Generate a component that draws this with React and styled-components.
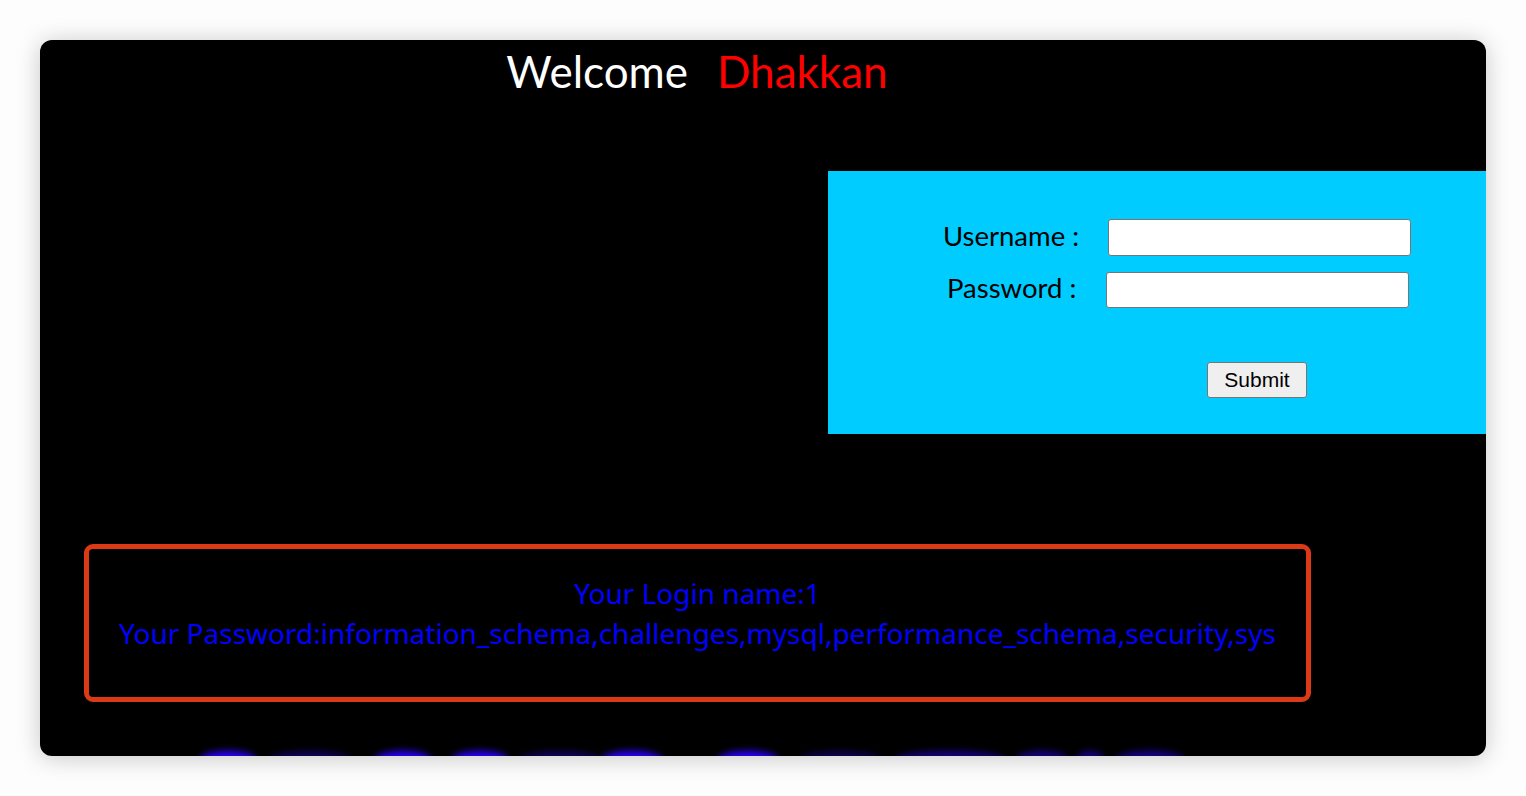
import React from "react";
import styled, { createGlobalStyle } from "styled-components";

const Global = createGlobalStyle`
  html, body { margin: 0; padding: 0; background: #fdfdfd; }
  body { font-family: "Lato", "Noto Sans", sans-serif; }
`;

const Page = styled.div`
  padding: 40px;
  box-sizing: border-box;
  width: 1526px;
  height: 796px;
`;

const Card = styled.div`
  position: relative;
  height: 716px;
  background: #000;
  border-radius: 12px;
  overflow: hidden;
  box-shadow: 0 2px 24px rgba(0, 0, 0, 0.22);
  display: flex;
  flex-direction: column;
  & > * { flex-shrink: 0; }
`;

const Heading = styled.div`
  display: flex;
  justify-content: center;
  gap: 29px;
  padding-right: 132px;
  margin-top: 1px;
  font-size: 44px;
  line-height: 60px;
`;

const Word = styled.span`
  color: ${(p) => p.$color};
`;

const FormRow = styled.div`
  display: flex;
  justify-content: flex-end;
  margin-top: 70px;
`;

const FormPanel = styled.div`
  width: 658px;
  height: 263px;
  background: #00ccff;
  box-sizing: border-box;
  padding: 48px 0 0 0;
  display: flex;
  flex-direction: column;
`;

const Field = styled.div`
  display: flex;
  align-items: center;
  height: ${(p) => p.$h}px;
  padding-left: ${(p) => p.$pl}px;
  gap: ${(p) => p.$gap}px;
  margin-bottom: ${(p) => p.$mb || 0}px;
`;

const Label = styled.label`
  font-size: 27.5px;
  line-height: 30px;
  color: #000;
  margin-top: -4px;
`;

const Input = styled.input`
  width: 303px;
  height: ${(p) => p.$h}px;
  box-sizing: border-box;
  border: 1px solid #767676;
  border-radius: 3px;
  background: #fff;
  outline: none;
`;

const ButtonRow = styled.div`
  display: flex;
  padding-left: 379px;
  margin-top: 54px;
`;

const Submit = styled.button`
  width: 100px;
  height: 36px;
  font-family: "Liberation Sans", Arial, sans-serif;
  font-size: 21px;
  color: #000;
  background: #efefef;
  border: 1px solid #767676;
  border-radius: 3px;
  padding: 0;
`;

const MessageBox = styled.div`
  margin: 110px 0 0 44px;
  width: 1227px;
  height: 158px;
  box-sizing: border-box;
  border: 5px solid #dc3a17;
  border-radius: 9px;
  display: flex;
  flex-direction: column;
  align-items: center;
  padding-top: 24px;
  color: #0000ff;
  font-family: "Noto Sans", sans-serif;
  font-size: 28px;
  line-height: 40px;
`;

const Line = styled.div`
  white-space: nowrap;
`;

const GlowArt = styled.svg`
  display: block;
  margin-top: 36px;
`;

const blobs = [
  { cx: 188, rx: 28, o: 1 },
  { cx: 363, rx: 28, o: 1 },
  { cx: 440, rx: 28, o: 1 },
  { cx: 592, rx: 30, o: 1 },
  { cx: 708, rx: 30, o: 1 },
  { cx: 270, rx: 40, o: 0.35 },
  { cx: 520, rx: 40, o: 0.35 },
  { cx: 800, rx: 40, o: 0.3 },
  { cx: 910, rx: 55, o: 0.5 },
  { cx: 1002, rx: 26, o: 0.5 },
  { cx: 1050, rx: 14, o: 0.5 },
  { cx: 1110, rx: 34, o: 0.55 },
];

export default function App() {
  return (
    <>
      <Global />
      <Page>
        <Card>
          <Heading>
            <Word $color="#ffffff">Welcome</Word>
            <Word $color="#ff0000">Dhakkan</Word>
          </Heading>
          <FormRow>
            <FormPanel>
              <Field $h={37} $pl={115} $gap={29} $mb={16}>
                <Label>Username :</Label>
                <Input type="text" $h={37} />
              </Field>
              <Field $h={36} $pl={119} $gap={30}>
                <Label>Password :</Label>
                <Input type="password" $h={36} />
              </Field>
              <ButtonRow>
                <Submit>Submit</Submit>
              </ButtonRow>
            </FormPanel>
          </FormRow>
          <MessageBox>
            <Line>Your Login name:1</Line>
            <Line>Your Password:information_schema,challenges,mysql,performance_schema,security,sys</Line>
          </MessageBox>
          <GlowArt width="1446" height="30" viewBox="0 0 1446 30">
            <defs>
              <filter id="glowblur" x="-50%" y="-100%" width="200%" height="300%">
                <feGaussianBlur stdDeviation="3.5" />
              </filter>
            </defs>
            <g filter="url(#glowblur)">
              {blobs.map((b, i) => (
                <ellipse key={i} cx={b.cx} cy={22} rx={b.rx} ry={9} fill="#2a00ff" opacity={b.o} />
              ))}
            </g>
          </GlowArt>
        </Card>
      </Page>
    </>
  );
}
